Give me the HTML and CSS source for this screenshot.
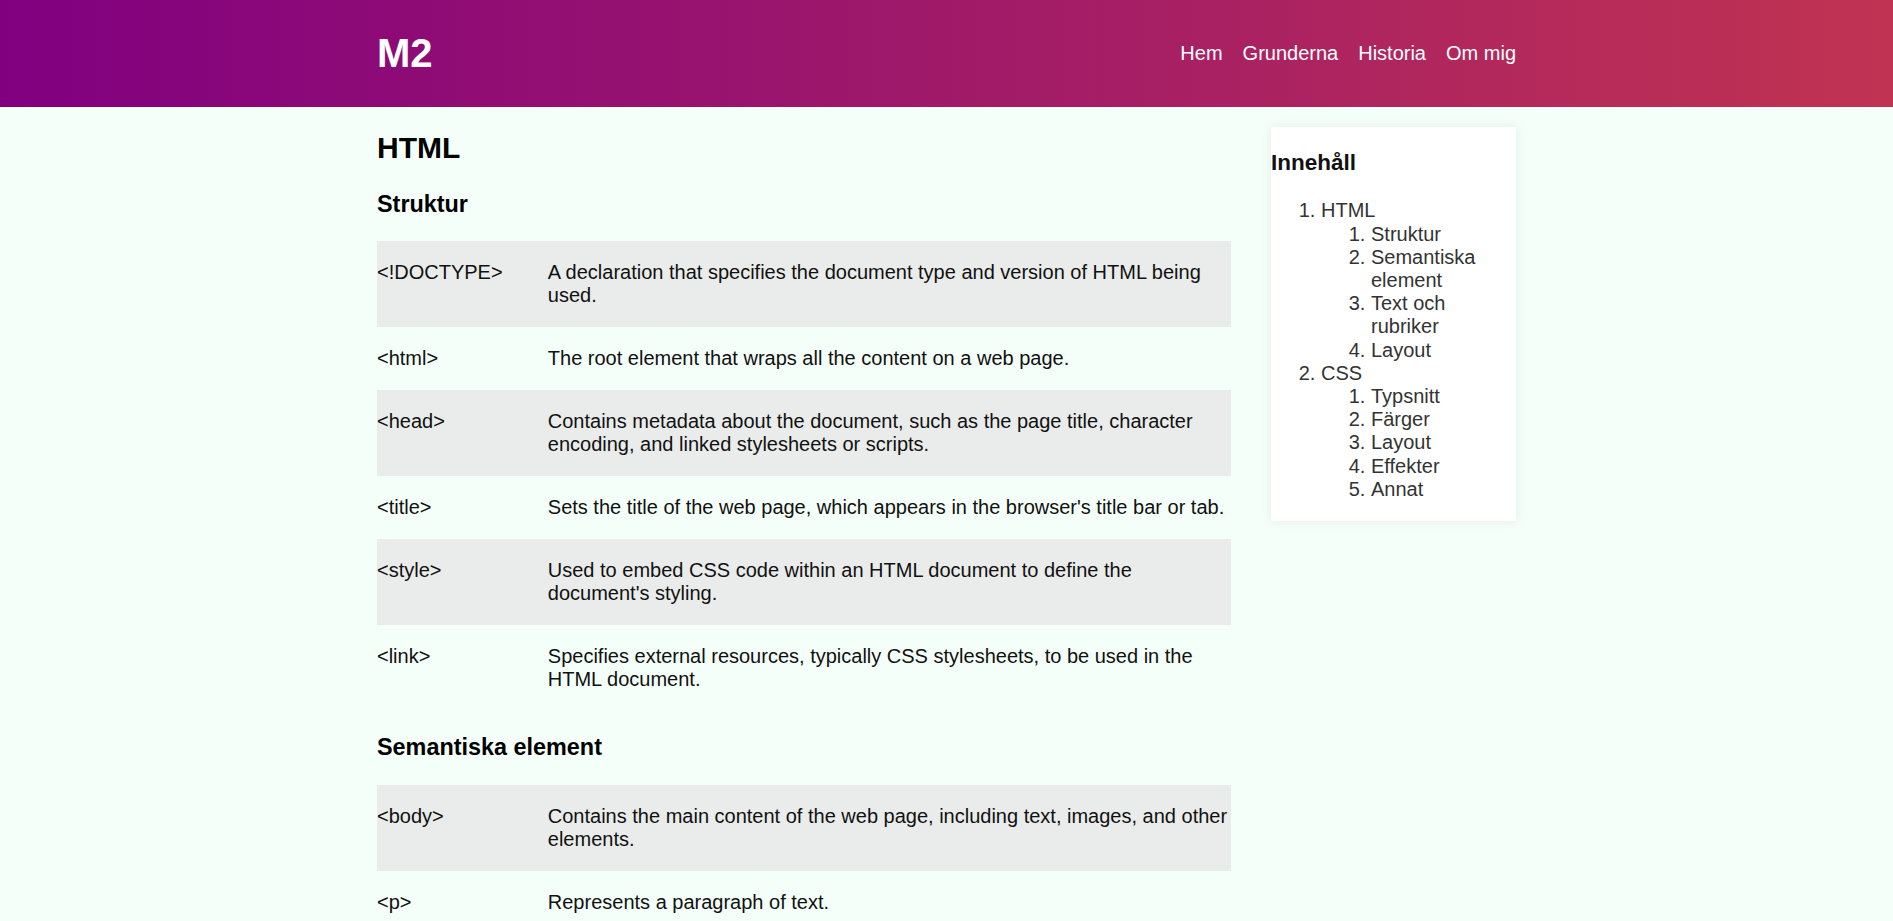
FILE: index.html
```html
<!DOCTYPE html>
<html lang="sv">
<head>
<meta charset="utf-8">
<title>M2</title>
<link rel="stylesheet" href="styles.css">
</head>
<body>
<header class="site-header">
  <div class="container header-inner">
    <h1 class="logo">M2</h1>
    <nav class="nav">
      <a href="#">Hem</a>
      <a href="#">Grunderna</a>
      <a href="#">Historia</a>
      <a href="#">Om mig</a>
    </nav>
  </div>
</header>
<div class="container layout">
  <main class="content">
    <h2>HTML</h2>
    <h3>Struktur</h3>
    <table class="ref-table">
      <tr><td class="tag">&lt;!DOCTYPE&gt;</td><td>A declaration that specifies the document type and version of HTML being used.</td></tr>
      <tr><td class="tag">&lt;html&gt;</td><td>The root element that wraps all the content on a web page.</td></tr>
      <tr><td class="tag">&lt;head&gt;</td><td>Contains metadata about the document, such as the page title, character encoding, and linked stylesheets or scripts.</td></tr>
      <tr><td class="tag">&lt;title&gt;</td><td>Sets the title of the web page, which appears in the browser's title bar or tab.</td></tr>
      <tr><td class="tag">&lt;style&gt;</td><td>Used to embed CSS code within an HTML document to define the document's styling.</td></tr>
      <tr><td class="tag">&lt;link&gt;</td><td>Specifies external resources, typically CSS stylesheets, to be used in the HTML document.</td></tr>
    </table>
    <h3>Semantiska element</h3>
    <table class="ref-table">
      <tr><td class="tag">&lt;body&gt;</td><td>Contains the main content of the web page, including text, images, and other elements.</td></tr>
      <tr><td class="tag">&lt;p&gt;</td><td>Represents a paragraph of text.</td></tr>
      <tr><td class="tag">&lt;header&gt;</td><td>Represents introductory content, typically a group of navigational aids.</td></tr>
      <tr><td class="tag">&lt;footer&gt;</td><td>Represents the footer of a section or page.</td></tr>
    </table>
  </main>
  <aside class="toc">
    <h3>Innehåll</h3>
    <ol>
      <li>HTML
        <ol>
          <li>Struktur</li>
          <li>Semantiska element</li>
          <li>Text och rubriker</li>
          <li>Layout</li>
        </ol>
      </li>
      <li>CSS
        <ol>
          <li>Typsnitt</li>
          <li>Färger</li>
          <li>Layout</li>
          <li>Effekter</li>
          <li>Annat</li>
        </ol>
      </li>
    </ol>
  </aside>
</div>
</body>
</html>
```
FILE: styles.css
```css
html, body {
  margin: 0;
  padding: 0;
}
body {
  background: #f5fffa;
  font-family: "Liberation Sans", Arial, sans-serif;
  font-size: 20px;
  color: #111;
}
.container {
  width: 1139px;
  margin: 0 auto;
}
.site-header {
  background: linear-gradient(to right, #800080, #c03352);
  height: 107px;
}
.header-inner {
  height: 100%;
  display: flex;
  align-items: center;
  justify-content: space-between;
}
.logo {
  margin: 0;
  font-size: 40px;
  font-weight: bold;
  color: #fff;
}
.nav {
  display: flex;
  gap: 20px;
}
.nav a {
  color: #fff;
  text-decoration: none;
  font-size: 20px;
}
.layout {
  display: flex;
  gap: 40px;
  align-items: flex-start;
}
.content {
  flex: 1;
  min-width: 0;
}
.content h2 {
  font-size: 30px;
  margin: 24px 0 25.5px;
  color: #000;
}
.content h3 {
  font-size: 23.4px;
  margin: 23.4px 0;
  color: #000;
}
.ref-table {
  width: 100%;
  border-collapse: collapse;
  border-spacing: 0;
}
.ref-table td {
  padding: 20px 0;
  vertical-align: top;
  line-height: 23px;
}
.ref-table td.tag {
  width: 20%;
}
.ref-table tr:nth-child(odd) {
  background: #eaeceb;
}
.toc {
  width: 245px;
  flex: none;
  margin-top: 20px;
  background: #fff;
  box-shadow: 0 0 10px rgba(0, 0, 0, 0.08);
}
.toc h3 {
  font-size: 22.5px;
  margin: 23px 0 23.4px;
  color: #111;
}
.toc ol {
  margin: 0 0 20px;
  padding-left: 50px;
  color: #333;
  line-height: 23.2px;
}
.toc ol ol {
  margin: 0;
}
```
